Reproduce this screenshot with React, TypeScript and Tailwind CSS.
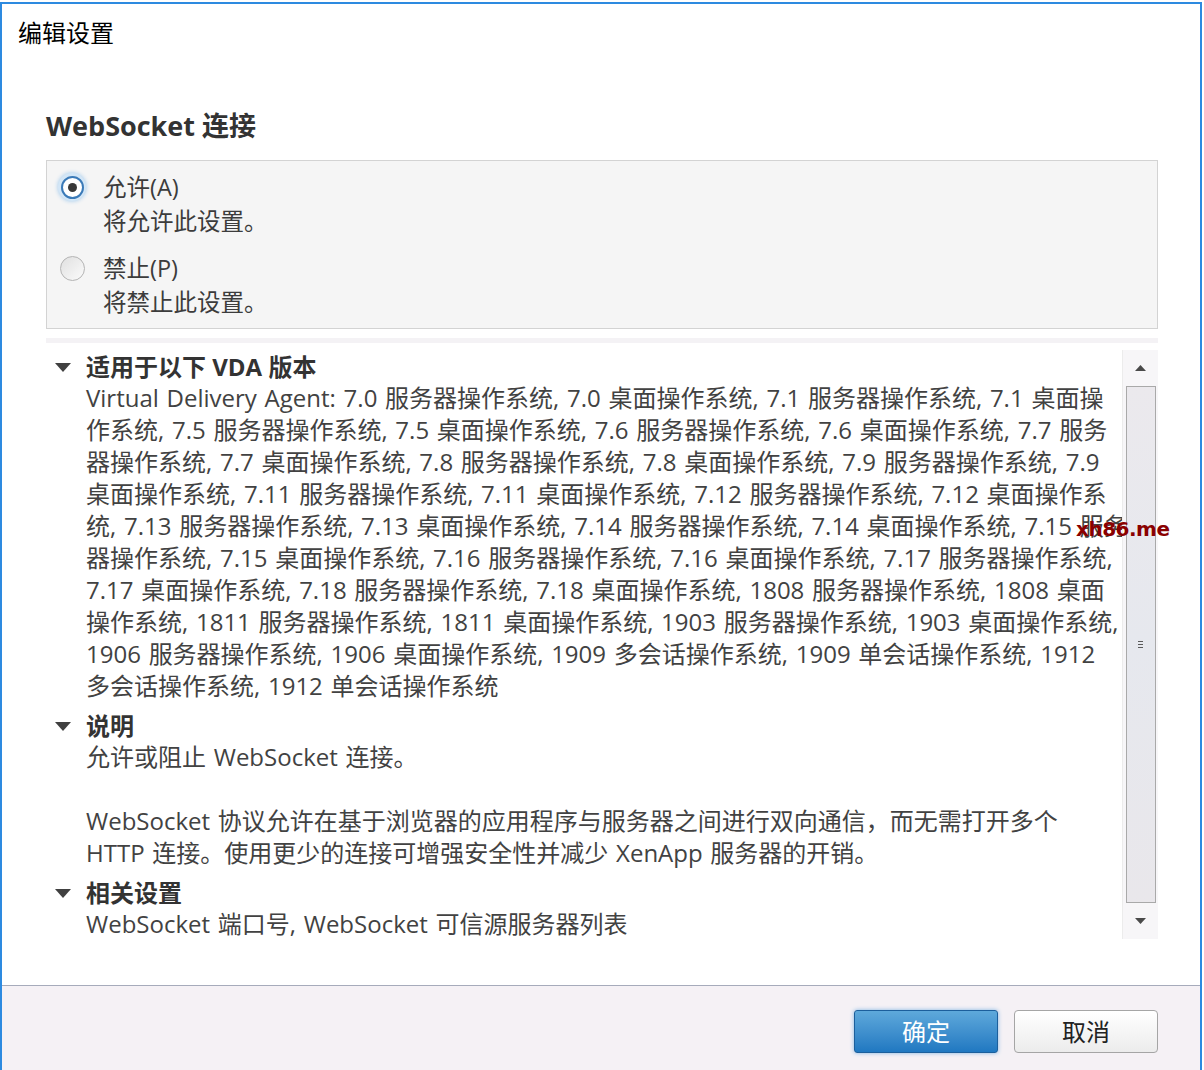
import type { ReactNode } from "react";

const font = {
  fontFamily: '"Open Sans", "Noto Sans CJK SC", sans-serif',
};

const versionLines = [
  "Virtual Delivery Agent: 7.0 服务器操作系统, 7.0 桌面操作系统, 7.1 服务器操作系统, 7.1 桌面操",
  "作系统, 7.5 服务器操作系统, 7.5 桌面操作系统, 7.6 服务器操作系统, 7.6 桌面操作系统, 7.7 服务",
  "器操作系统, 7.7 桌面操作系统, 7.8 服务器操作系统, 7.8 桌面操作系统, 7.9 服务器操作系统, 7.9",
  "桌面操作系统, 7.11 服务器操作系统, 7.11 桌面操作系统, 7.12 服务器操作系统, 7.12 桌面操作系",
  "统, 7.13 服务器操作系统, 7.13 桌面操作系统, 7.14 服务器操作系统, 7.14 桌面操作系统, 7.15 服务",
  "器操作系统, 7.15 桌面操作系统, 7.16 服务器操作系统, 7.16 桌面操作系统, 7.17 服务器操作系统,",
  "7.17 桌面操作系统, 7.18 服务器操作系统, 7.18 桌面操作系统, 1808 服务器操作系统, 1808 桌面",
  "操作系统, 1811 服务器操作系统, 1811 桌面操作系统, 1903 服务器操作系统, 1903 桌面操作系统,",
  "1906 服务器操作系统, 1906 桌面操作系统, 1909 多会话操作系统, 1909 单会话操作系统, 1912",
  "多会话操作系统, 1912 单会话操作系统",
];

function Radio({ checked }: { checked: boolean }) {
  if (checked) {
    return (
      <span className="flex h-[28px] w-[28px] shrink-0 items-center justify-center rounded-full bg-[#d3e6f6] shadow-[0_0_4px_#9cc7ec]">
        <span className="flex h-[23px] w-[23px] items-center justify-center rounded-full border-2 border-[#3a7ab8] bg-white">
          <span className="h-[9px] w-[9px] rounded-full bg-[#383838]" />
        </span>
      </span>
    );
  }
  return (
    <span className="flex h-[28px] w-[28px] shrink-0 items-center justify-center">
      <span className="h-[25px] w-[25px] rounded-full border border-[#b4b4b4] bg-gradient-to-br from-[#e0e0e0] to-[#fbfbfb]" />
    </span>
  );
}

function RadioOption({
  checked,
  label,
  hint,
}: {
  checked: boolean;
  label: string;
  hint: string;
}) {
  return (
    <div className="text-[23.5px] leading-[34px] text-[#3c3c3c]">
      <div className="flex items-center">
        <Radio checked={checked} />
        <span className="ml-[17px] whitespace-nowrap">{label}</span>
      </div>
      <div className="pl-[45px] whitespace-nowrap">{hint}</div>
    </div>
  );
}

function Section({ title, children }: { title: string; children: ReactNode }) {
  return (
    <div className="mb-[9px]">
      <div className="flex items-center text-[24px] leading-[30px] font-bold text-[#333]">
        <svg width="16" height="9" viewBox="0 0 16 9" className="ml-[9px] mr-[15px] shrink-0">
          <path d="M0 0 H16 L8 9 Z" fill="#404040" />
        </svg>
        <span className="whitespace-nowrap">{title}</span>
      </div>
      <div className="pl-[40px] text-[24px] leading-[32px] text-[#424242] [word-spacing:1.5px]">
        {children}
      </div>
    </div>
  );
}

function Scrollbar() {
  return (
    <div className="mt-[7px] flex h-[589px] w-[36px] shrink-0 flex-col items-center border-l border-[#ececec] bg-[#f7f6f8]">
      <div className="flex h-[36px] items-center justify-center">
        <svg width="11" height="6" viewBox="0 0 11 6">
          <path d="M0 6 L5.5 0 L11 6 Z" fill="#4a4a4a" />
        </svg>
      </div>
      <div className="flex w-[30px] flex-1 items-center justify-center border border-[#a9a9a9] bg-gradient-to-b from-[#ebe9ed] via-[#e6e8ee] to-[#e9e7eb]">
        <div className="flex flex-col gap-[2px]">
          <span className="h-px w-[5px] bg-[#5a5a5a]" />
          <span className="h-px w-[5px] bg-[#5a5a5a]" />
          <span className="h-px w-[5px] bg-[#5a5a5a]" />
        </div>
      </div>
      <div className="flex h-[36px] items-center justify-center">
        <svg width="11" height="6" viewBox="0 0 11 6">
          <path d="M0 0 H11 L5.5 6 Z" fill="#4a4a4a" />
        </svg>
      </div>
    </div>
  );
}

export default function App() {
  return (
    <div className="h-[1070px] w-[1204px] overflow-hidden bg-white" style={font}>
      <div className="mt-[2px] flex h-[1068px] w-[1202px] flex-col border-x-2 border-t-2 border-[#2d8ae0]">
        <div className="flex-1 pl-[44px]">
          <div className="-ml-[28px] pt-[13px] text-[24px] leading-[32px] text-black">编辑设置</div>

          <div className="mt-[60px] text-[27px] leading-[34px] font-bold text-[#333]">
            WebSocket 连接
          </div>

          <div className="mt-[17px] w-[1112px] border border-[#d3d3d3] bg-[#f5f5f5] py-[9px] pl-[11px]">
            <RadioOption checked label="允许(A)" hint="将允许此设置。" />
            <div className="h-[13px]" />
            <RadioOption checked={false} label="禁止(P)" hint="将禁止此设置。" />
          </div>

          <div className="relative mt-[9px] w-[1112px] border-t-[5px] border-[#f4f2f5]">
            <div className="flex">
              <div className="min-w-0 flex-1 pt-[9px]">
                <Section title="适用于以下 VDA 版本">
                  {versionLines.map((line) => (
                    <div key={line} className="whitespace-nowrap">
                      {line}
                    </div>
                  ))}
                </Section>
                <Section title="说明">
                  <div className="whitespace-nowrap">允许或阻止 WebSocket 连接。</div>
                  <div className="h-[32px]" />
                  <div className="whitespace-nowrap">
                    WebSocket 协议允许在基于浏览器的应用程序与服务器之间进行双向通信，而无需打开多个
                  </div>
                  <div className="whitespace-nowrap">
                    HTTP 连接。使用更少的连接可增强安全性并减少 XenApp 服务器的开销。
                  </div>
                </Section>
                <Section title="相关设置">
                  <div className="whitespace-nowrap">WebSocket 端口号, WebSocket 可信源服务器列表</div>
                </Section>
              </div>
              <Scrollbar />
            </div>
            <div
              className="absolute top-[172px] left-[1030px] text-[20px] leading-[28px] font-bold tracking-[-0.5px] text-[#8a0000]"
              style={{ fontFamily: '"DejaVu Sans", sans-serif' }}
            >
              xh86.me
            </div>
          </div>
        </div>

        <div className="flex h-[85px] justify-end gap-[16px] border-t border-[#a6abbb] bg-[#f5f1f5] pt-[24px] pr-[42px]">
          <button
            type="button"
            className="h-[43px] w-[144px] rounded-[3px] border border-[#1c5f9c] bg-gradient-to-b from-[#5ea9db] to-[#1f78c1] text-[24px] text-white shadow-[0_0_4px_#7fb4e2]"
          >
            确定
          </button>
          <button
            type="button"
            className="h-[43px] w-[144px] rounded-[4px] border border-[#a5a5a5] bg-gradient-to-b from-white to-[#ececec] text-[24px] text-[#222]"
          >
            取消
          </button>
        </div>
      </div>
    </div>
  );
}
